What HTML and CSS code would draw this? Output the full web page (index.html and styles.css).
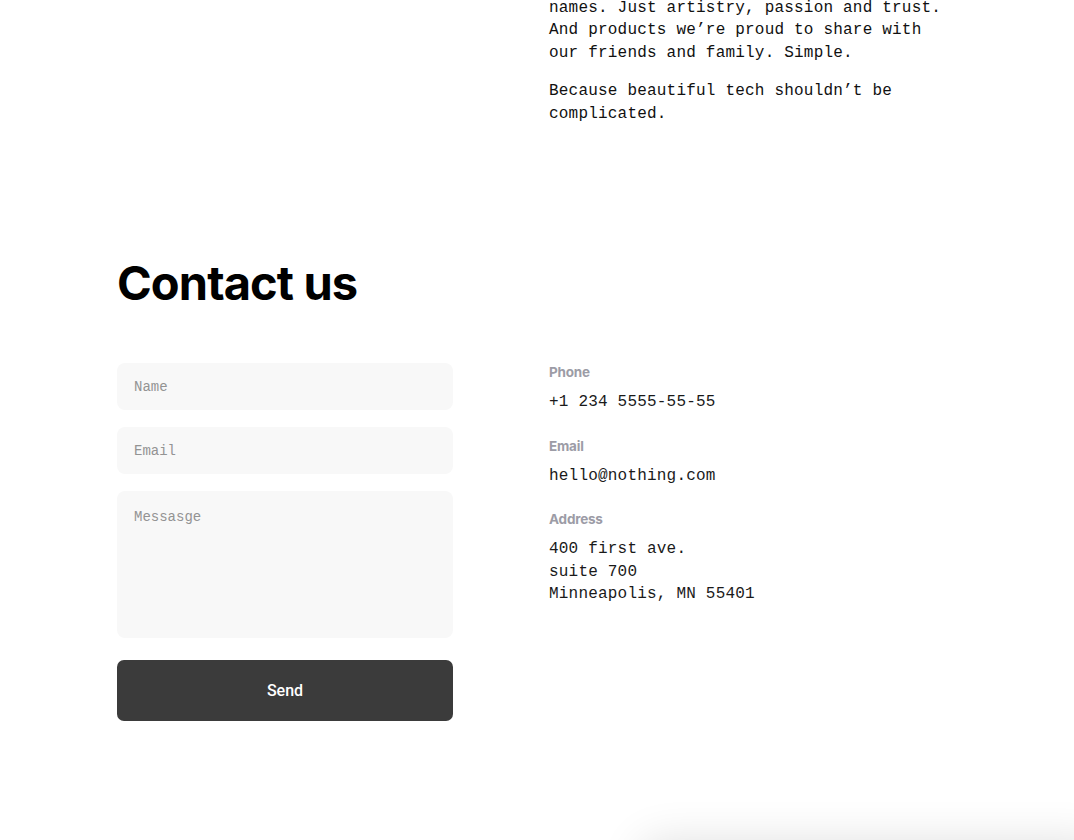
FILE: index.html
```html
<!DOCTYPE html>
<html lang="en">
<head>
<meta charset="utf-8">
<title>Contact us</title>
<link rel="stylesheet" href="styles.css">
</head>
<body>
<main class="page">
  <section class="about">
    <div class="about-spacer"></div>
    <div class="about-text">
      <p>names. Just artistry, passion and trust. And products we’re proud to share with our friends and family. Simple.</p>
      <p>Because beautiful tech shouldn’t be complicated.</p>
    </div>
  </section>

  <section class="contact">
    <h2 class="contact-title">Contact us</h2>
    <div class="contact-grid">
      <form class="contact-form" onsubmit="return false">
        <input class="field" type="text" placeholder="Name">
        <input class="field" type="email" placeholder="Email">
        <textarea class="field field-message" placeholder="Messasge"></textarea>
        <button class="send" type="submit">Send</button>
      </form>
      <div class="contact-info">
        <div class="info-item">
          <div class="info-label">Phone</div>
          <div class="info-value">+1 234 5555-55-55</div>
        </div>
        <div class="info-item">
          <div class="info-label">Email</div>
          <div class="info-value">hello@nothing.com</div>
        </div>
        <div class="info-item">
          <div class="info-label">Address</div>
          <div class="info-value">400 first ave.<br>suite 700<br>Minneapolis, MN 55401</div>
        </div>
      </div>
    </div>
  </section>
</main>
<div class="floating-panel"></div>
</body>
</html>
```

FILE: styles.css
```css
html, body {
  margin: 0;
  padding: 0;
  background: #ffffff;
  overflow: hidden;
}

body {
  font-family: "Liberation Mono", "DejaVu Sans Mono", monospace;
  color: #111;
}

.page {
  padding: 0 93px 0 117px;
}

.about {
  display: grid;
  grid-template-columns: 432px 1fr;
  margin-top: -3px;
}

.about-text {
  width: 400px;
}

.about-text p {
  margin: 0 0 16px;
  font-size: 16px;
  letter-spacing: 0.2px;
  line-height: 22.4px;
  color: #111;
}

.contact {
  padding-top: 114px;
}

.contact-title {
  margin: 0;
  font-family: "Inter", "Liberation Sans", sans-serif;
  font-weight: 700;
  font-size: 47px;
  line-height: 56px;
  letter-spacing: -0.9px;
  color: #000;
}

.contact-grid {
  display: grid;
  grid-template-columns: 432px 1fr;
  margin-top: 52px;
}

.contact-form {
  display: flex;
  flex-direction: column;
  gap: 17px;
  width: 336px;
}

.field {
  box-sizing: border-box;
  width: 100%;
  height: 47px;
  border: none;
  border-radius: 8px;
  background: #f8f8f8;
  padding: 0 17px;
  font-family: "Liberation Mono", "DejaVu Sans Mono", monospace;
  font-size: 14px;
  color: #222;
  outline: none;
}

.field::placeholder {
  color: #939393;
}

.field-message {
  height: 147px;
  padding-top: 18px;
  resize: none;
}

.send {
  margin-top: 5px;
  height: 61px;
  border: none;
  border-radius: 7px;
  background: #3b3b3b;
  color: #fff;
  font-family: "Roboto", "Liberation Sans", Arial, sans-serif;
  font-size: 16px;
  font-weight: 500;
  cursor: pointer;
}

.contact-info {
  display: flex;
  flex-direction: column;
  gap: 24px;
  padding-top: 1px;
}

.info-label {
  font-family: "Inter", "Liberation Sans", sans-serif;
  font-weight: 700;
  font-size: 13.5px;
  line-height: 16px;
  color: #9c9ca6;
  letter-spacing: -0.2px;
}

.info-value {
  margin-top: 11px;
  font-size: 16px;
  letter-spacing: 0.2px;
  line-height: 22.5px;
  color: #1a1a1a;
}

.floating-panel {
  position: fixed;
  left: 640px;
  right: -30px;
  top: 840px;
  height: 120px;
  border-radius: 20px;
  background: #fff;
  box-shadow: 0 0 44px rgba(0, 0, 0, 0.12);
}
```
